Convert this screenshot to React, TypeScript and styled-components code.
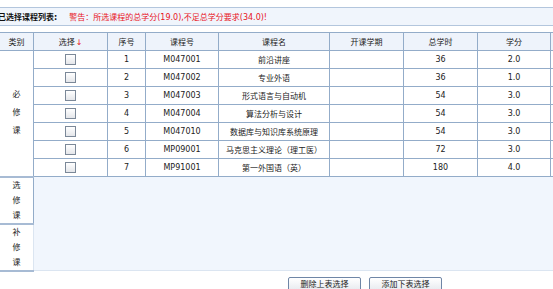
import React from "react";
import styled, { createGlobalStyle } from "styled-components";

const GlobalStyle = createGlobalStyle`
  body {
    margin: 0;
    overflow: hidden;
    background: #ffffff;
    font-family: "DejaVu Sans", "Noto Sans CJK SC", sans-serif;
    font-size: 8px;
    color: #222;
  }
`;

const Page = styled.div`
  width: 553px;
  height: 289px;
  overflow: hidden;
`;

const TitleBar = styled.div`
  margin-top: 7px;
  height: 17px;
  display: flex;
  align-items: center;
  gap: 12px;
  background: #f0f5fc;
  border-top: 1px solid #b3c6dd;
  border-bottom: 1px solid #b3c6dd;
`;

const Title = styled.span`
  font-weight: bold;
  margin-left: -2px;
  color: #111;
`;

const Warning = styled.span`
  color: #e8141c;
`;

const Table = styled.table`
  margin-top: 6px;
  margin-left: -1px;
  width: 586px;
  table-layout: fixed;
  border-collapse: collapse;
`;

const HeadCell = styled.th`
  height: 17px;
  padding: 0;
  font-weight: normal;
  text-align: center;
  background: #eef3fb;
  border: 1px solid #93acc9;
`;

const Cell = styled.td`
  height: 17px;
  padding: 0;
  text-align: center;
  background: #fff;
  border: 1px solid #93acc9;
`;

const CategoryCell = styled.td<{ $lh: number; $h: number }>`
  height: ${(p) => p.$h}px;
  padding: 0;
  text-align: center;
  vertical-align: middle;
  line-height: ${(p) => p.$lh}px;
  background: #fff;
  border: 1px solid #93acc9;
  border-bottom: 2px solid #a7bbd4;
`;

const EmptyArea = styled.td`
  padding: 0;
  background: #f1f6fd;
  border: 1px solid #dbe5f1;
  border-top: 1px solid #93acc9;
`;

const Arrow = styled.span`
  color: #e8141c;
  margin-left: 1px;
`;

const Check = styled.span`
  display: inline-block;
  width: 9px;
  height: 9px;
  vertical-align: middle;
  border: 1px solid #7b8898;
  background: linear-gradient(#ffffff, #e4e6ea);
`;

const ButtonRow = styled.div`
  display: flex;
  gap: 8px;
  padding-left: 288px;
  margin-top: 5px;
`;

const Button = styled.button`
  width: 73px;
  height: 15px;
  padding: 0;
  line-height: 13px;
  font-family: "DejaVu Sans", "Noto Sans CJK SC", sans-serif;
  font-size: 8px;
  color: #222;
  border: 1px solid #6f86a6;
  border-radius: 2px;
  background: linear-gradient(#ffffff, #e6e9ee);
`;

const courses = [
  { no: 1, code: "M047001", name: "前沿讲座", hours: 36, credit: "2.0" },
  { no: 2, code: "M047002", name: "专业外语", hours: 36, credit: "1.0" },
  { no: 3, code: "M047003", name: "形式语言与自动机", hours: 54, credit: "3.0" },
  { no: 4, code: "M047004", name: "算法分析与设计", hours: 54, credit: "3.0" },
  { no: 5, code: "M047010", name: "数据库与知识库系统原理", hours: 54, credit: "3.0" },
  { no: 6, code: "MP09001", name: "马克思主义理论（理工医）", hours: 72, credit: "3.0" },
  { no: 7, code: "MP91001", name: "第一外国语（英）", hours: 180, credit: "4.0" },
];

const widths = [34, 74, 38, 73, 111, 74, 74, 73, 35];

const App: React.FC = () => {
  return (
    <Page>
      <GlobalStyle />
      <TitleBar>
        <Title>已选择课程列表:</Title>
        <Warning>警告：所选课程的总学分(19.0),不足总学分要求(34.0)!</Warning>
      </TitleBar>

      <Table>
        <colgroup>
          {widths.map((w, i) => (
            <col key={i} style={{ width: w }} />
          ))}
        </colgroup>
        <thead>
          <tr>
            <HeadCell>类别</HeadCell>
            <HeadCell>
              选择<Arrow>↓</Arrow>
            </HeadCell>
            <HeadCell>序号</HeadCell>
            <HeadCell>课程号</HeadCell>
            <HeadCell>课程名</HeadCell>
            <HeadCell>开课学期</HeadCell>
            <HeadCell>总学时</HeadCell>
            <HeadCell>学分</HeadCell>
            <HeadCell />
          </tr>
        </thead>
        <tbody>
          {courses.map((c, i) => (
            <tr key={c.code}>
              {i === 0 && (
                <CategoryCell rowSpan={7} $lh={18} $h={17}>
                  必<br />修<br />课
                </CategoryCell>
              )}
              <Cell>
                <Check />
              </Cell>
              <Cell>{c.no}</Cell>
              <Cell>{c.code}</Cell>
              <Cell>{c.name}</Cell>
              <Cell />
              <Cell>{c.hours}</Cell>
              <Cell>{c.credit}</Cell>
              <Cell />
            </tr>
          ))}
          <tr>
            <CategoryCell $lh={15} $h={44}>
              选<br />修<br />课
            </CategoryCell>
            <EmptyArea colSpan={8} rowSpan={2} />
          </tr>
          <tr>
            <CategoryCell $lh={15} $h={44}>
              补<br />修<br />课
            </CategoryCell>
          </tr>
        </tbody>
      </Table>

      <ButtonRow>
        <Button>删除上表选择</Button>
        <Button>添加下表选择</Button>
      </ButtonRow>
    </Page>
  );
};

export default App;
